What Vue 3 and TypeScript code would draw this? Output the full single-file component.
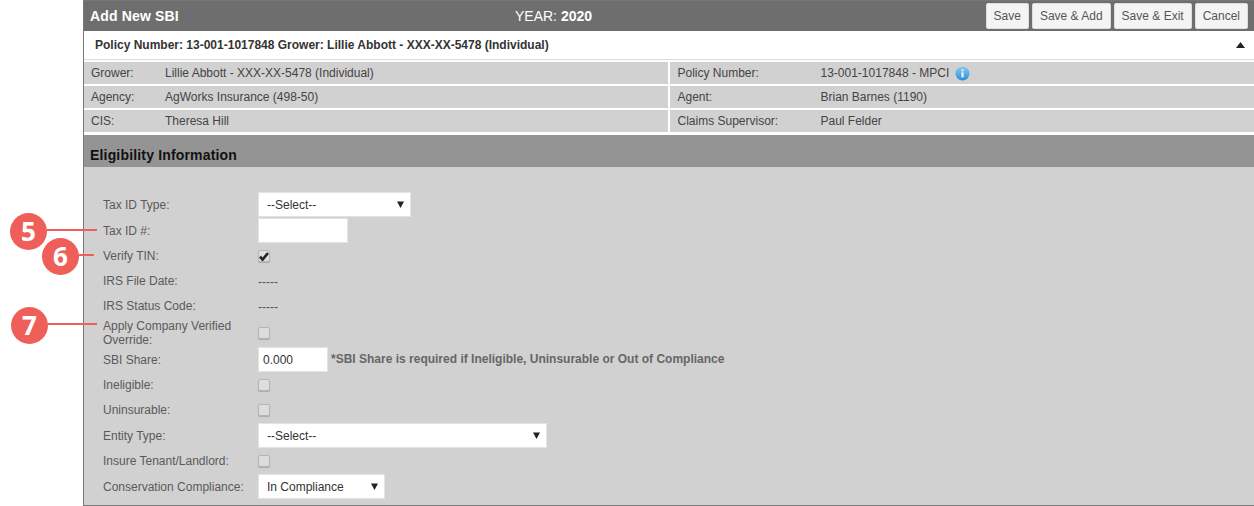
<script setup lang="ts">
const buttons = ['Save', 'Save & Add', 'Save & Exit', 'Cancel'];
const infoRows = [
  { l1: 'Grower:', v1: 'Lillie Abbott - XXX-XX-5478 (Individual)', l2: 'Policy Number:', v2: '13-001-1017848 - MPCI', info: true },
  { l1: 'Agency:', v1: 'AgWorks Insurance (498-50)', l2: 'Agent:', v2: 'Brian Barnes (1190)', info: false },
  { l1: 'CIS:', v1: 'Theresa Hill', l2: 'Claims Supervisor:', v2: 'Paul Felder', info: false },
];
const callouts = [
  { n: 5, cls: 'c5' },
  { n: 6, cls: 'c6' },
  { n: 7, cls: 'c7' },
];
</script>

<template>
  <div class="page">
    <div class="panel">
      <div class="topbar">
        <div class="title">Add New SBI</div>
        <div class="year">YEAR: <b>2020</b></div>
        <div class="actions">
          <button v-for="b in buttons" :key="b" class="btn">{{ b }}</button>
        </div>
      </div>

      <div class="summary">
        <span>Policy Number: 13-001-1017848 Grower: Lillie Abbott - XXX-XX-5478 (Individual)</span>
        <svg class="caret-up" width="9" height="6" viewBox="0 0 9 6"><path d="M4.5 0 9 6H0z" fill="#222" /></svg>
      </div>

      <div class="info">
        <div v-for="r in infoRows" :key="r.l1" class="info-row">
          <div class="cell left">
            <span class="k">{{ r.l1 }}</span><span>{{ r.v1 }}</span>
          </div>
          <div class="cell right">
            <span class="k">{{ r.l2 }}</span><span>{{ r.v2 }}</span>
            <svg v-if="r.info" class="i-icon" width="15" height="15" viewBox="0 0 15 15">
              <defs>
                <linearGradient id="ig" x1="0" y1="0" x2="0" y2="1">
                  <stop offset="0" stop-color="#8accf0" />
                  <stop offset="1" stop-color="#2a8fd8" />
                </linearGradient>
              </defs>
              <circle cx="7.5" cy="7.5" r="7" fill="url(#ig)" />
              <rect x="6.4" y="6.4" width="2.2" height="5" fill="#fff" fill-opacity="0.92" />
              <rect x="6.4" y="3.4" width="2.2" height="2" fill="#fff" fill-opacity="0.8" />
            </svg>
          </div>
        </div>
      </div>

      <div class="section">Eligibility Information</div>

      <div class="form">
        <div class="row first">
          <label>Tax ID Type:</label>
          <div class="select w152">--Select--<svg class="arrow" width="7" height="7" viewBox="0 0 7 7"><path d="M0 .5h7L3.5 7z" fill="#222" /></svg></div>
        </div>
        <div class="row">
          <label>Tax ID #:</label>
          <input class="text w90" type="text" />
        </div>
        <div class="row">
          <label>Verify TIN:</label>
          <div class="check">
            <svg width="10" height="9" viewBox="0 0 10 9"><path d="M1 4.6 3.6 7.6 9 1" fill="none" stroke="#222" stroke-width="2.6" /></svg>
          </div>
        </div>
        <div class="row">
          <label>IRS File Date:</label>
          <span class="dash">-----</span>
        </div>
        <div class="row">
          <label>IRS Status Code:</label>
          <span class="dash">-----</span>
        </div>
        <div class="row tall">
          <label class="two">Apply Company Verified Override:</label>
          <div class="check"></div>
        </div>
        <div class="row">
          <label>SBI Share:</label>
          <input class="text w70" type="text" value="0.000" />
          <span class="note">*SBI Share is required if Ineligible, Uninsurable or Out of Compliance</span>
        </div>
        <div class="row">
          <label>Ineligible:</label>
          <div class="check"></div>
        </div>
        <div class="row gap1">
          <label>Uninsurable:</label>
          <div class="check"></div>
        </div>
        <div class="row">
          <label>Entity Type:</label>
          <div class="select w289">--Select--<svg class="arrow" width="7" height="7" viewBox="0 0 7 7"><path d="M0 .5h7L3.5 7z" fill="#222" /></svg></div>
        </div>
        <div class="row gap1">
          <label>Insure Tenant/Landlord:</label>
          <div class="check"></div>
        </div>
        <div class="row">
          <label>Conservation Compliance:</label>
          <div class="select w127">In Compliance<svg class="arrow" width="7" height="7" viewBox="0 0 7 7"><path d="M0 .5h7L3.5 7z" fill="#222" /></svg></div>
        </div>
      </div>
    </div>

    <div v-for="c in callouts" :key="c.n" class="callout" :class="c.cls">
      <span class="badge">{{ c.n }}</span>
      <span class="rule"></span>
    </div>
  </div>
</template>

<style scoped>
.page {
  position: relative;
  width: 1254px;
  height: 506px;
  padding-left: 83px;
  box-sizing: border-box;
  overflow: hidden;
  background: #fff;
  font-family: "Liberation Sans", Arial, sans-serif;
  font-size: 12px;
}

.panel {
  height: 506px;
  box-sizing: border-box;
  border-left: 1px solid #777;
  border-bottom: 1px solid #777;
  display: flex;
  flex-direction: column;
}

.topbar {
  height: 31px;
  flex: none;
  display: flex;
  align-items: center;
  position: relative;
  background: #6e6e6e;
  border-top: 1px solid #777;
  box-sizing: border-box;
  color: #fff;
  padding: 0 6px;
}

.title {
  font-size: 14px;
  font-weight: bold;
  letter-spacing: 0.15px;
  margin-top: -1px;
}

.year {
  position: absolute;
  left: 431px;
  top: 7px;
  font-size: 14px;
}

.actions {
  margin-left: auto;
  display: flex;
  gap: 3px;
}

.btn {
  height: 26px;
  padding: 0 7px;
  border: 1px solid #ddd;
  border-radius: 2px;
  background: #f4f4f4;
  color: #555;
  font: 12px "Liberation Sans", Arial, sans-serif;
}

.summary {
  height: 28px;
  flex: none;
  display: flex;
  align-items: center;
  justify-content: space-between;
  padding: 0 9px 0 11px;
  border-bottom: 1px solid #ddd;
  box-sizing: content-box;
  font-weight: bold;
  color: #333;
}

.info {
  padding-top: 2px;
  background: #fff;
}

.info-row {
  display: flex;
  gap: 2px;
  height: 22px;
  margin-bottom: 2px;
}

.cell {
  flex: 1;
  display: flex;
  align-items: center;
  background: #d1d1d1;
  color: #444;
}

.left {
  padding-left: 7px;
}

.right {
  padding-left: 8px;
}

.left .k {
  width: 74px;
}

.right .k {
  width: 143px;
}

.i-icon {
  margin-left: 6px;
}

.section {
  height: 32px;
  flex: none;
  margin-top: 1px;
  box-sizing: border-box;
  padding: 12px 6px 0;
  background: #949494;
  color: #111;
  font-size: 14px;
  font-weight: bold;
  letter-spacing: 0.17px;
}

.form {
  flex: 1;
  background: #d1d1d1;
  padding: 25px 0 0 19px;
  color: #5a5a5a;
}

.row {
  display: flex;
  align-items: center;
  height: 25px;
}

.first {
  height: 26px;
  align-items: flex-start;
}

.first label {
  line-height: 27px;
}

.tall {
  height: 29px;
}

.gap1 {
  height: 26px;
}

.gap1 .check {
  margin-top: 0;
}

label {
  width: 155px;
  flex: none;
}

.two {
  width: 140px;
  margin-right: 15px;
  line-height: 14px;
}

.select {
  position: relative;
  height: 25px;
  line-height: 24px;
  padding-left: 8px;
  box-sizing: border-box;
  background: #fff;
  border: 1px solid #e4e4e4;
  color: #333;
}

.arrow {
  position: absolute;
  right: 6px;
  top: 8px;
}

.w152 {
  width: 153px;
}

.w289 {
  width: 289px;
}

.w127 {
  width: 127px;
}

.text {
  height: 25px;
  box-sizing: border-box;
  background: #fff;
  border: 1px solid #e4e4e4;
  outline: none;
  padding: 0 4px;
  color: #333;
  font: 12px "Liberation Sans", Arial, sans-serif;
}

.w90 {
  width: 90px;
}

.w70 {
  width: 70px;
}

.note {
  margin: 0 0 1px 3px;
  font-weight: bold;
  color: #666;
}

.check {
  width: 10px;
  height: 10px;
  margin-top: 1px;
  border: 1px solid #b5b5b5;
  border-radius: 2px;
  background: #ddd;
  box-shadow: 0 1px 1px #aaa;
  display: flex;
  align-items: center;
  justify-content: center;
}

.dash {
  margin-top: 3px;
  color: #555;
}

.callout {
  position: absolute;
  display: flex;
  align-items: center;
}

.c5 {
  left: 10px;
  top: 213px;
}

.c6 {
  left: 42px;
  top: 238px;
}

.c7 {
  left: 11px;
  top: 307px;
}

.badge {
  width: 37px;
  height: 37px;
  border-radius: 50%;
  background: #ef5f5a;
  color: #fff;
  font: bold 26px/37px "Open Sans", sans-serif;
  text-align: center;
}

.rule {
  height: 2px;
  margin-top: -3px;
  background: #ef5f5a;
  width: 50px;
}

.c6 .rule {
  width: 15px;
}

.c7 .rule {
  width: 49px;
}
</style>
